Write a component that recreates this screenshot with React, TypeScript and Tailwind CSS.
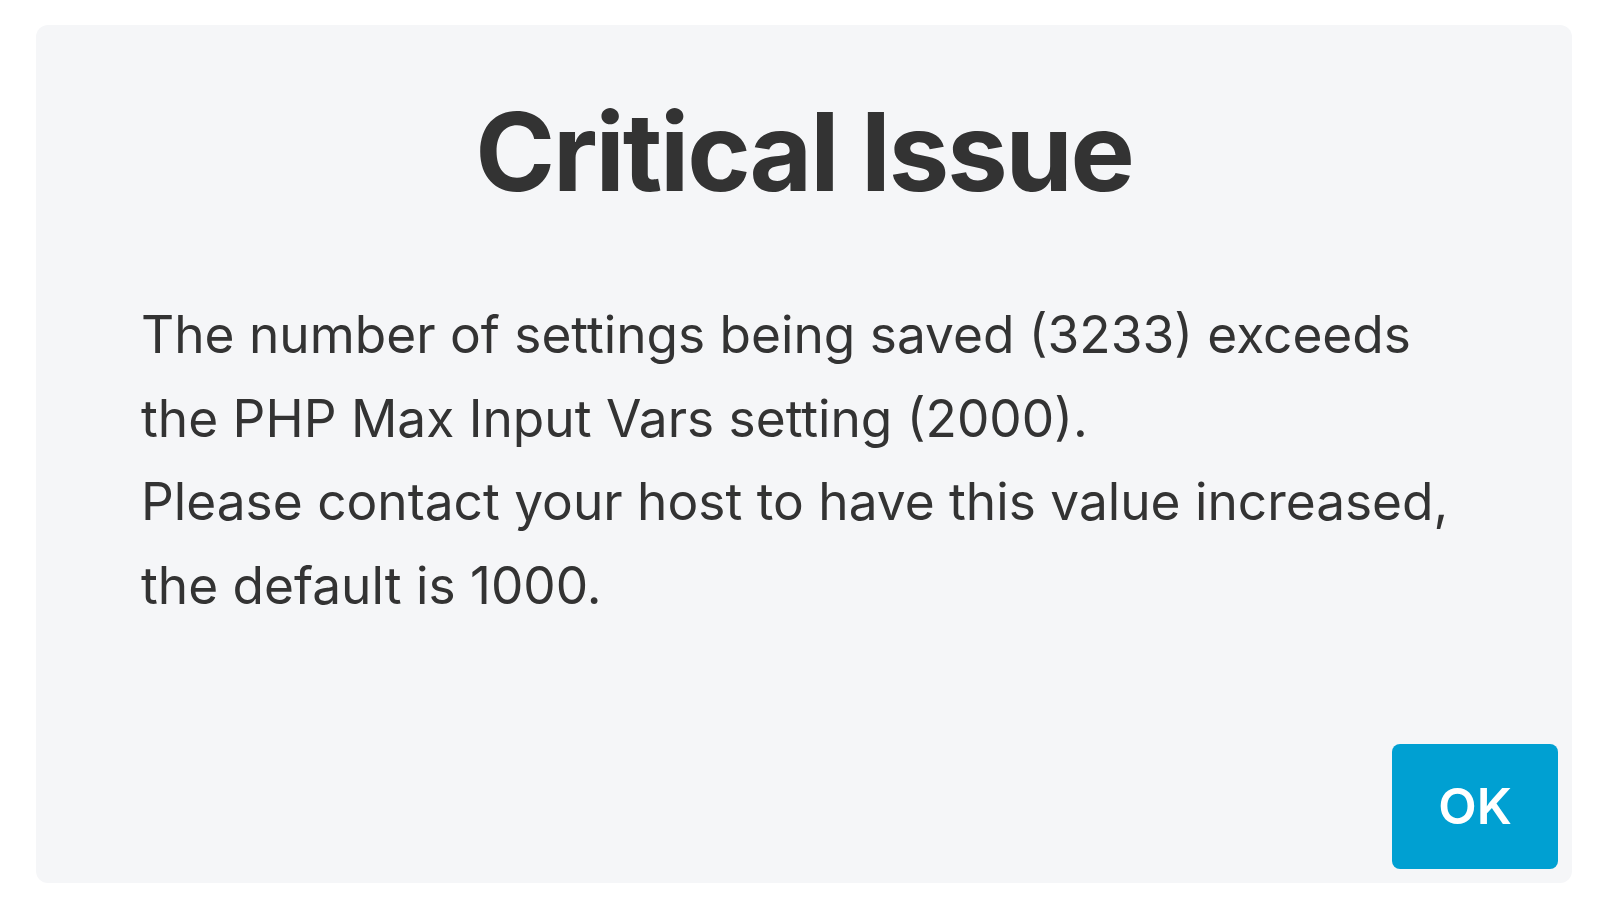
export default function App() {
  return (
    <div className="w-[1600px] h-[903px] bg-white pt-[25px] pl-[36px] pr-[28px] pb-[20px] font-['Inter',sans-serif]">
      <div className="h-full w-full rounded-xl bg-[#f5f6f8] flex flex-col">
        <h1 className="mt-[73px] text-center text-[108px] leading-none font-bold text-[#333333] tracking-[-0.02em]">
          Critical Issue
        </h1>
        <p className="mt-[87px] ml-[105px] w-[1360px] text-[51.4px] leading-[83.7px] text-[#333333]">
          The number of settings being saved (3233) exceeds the PHP Max Input Vars setting (2000).
          <br />
          Please contact your host to have this value increased, the default is 1000.
        </p>
        <div className="mt-auto flex justify-end p-[14px]">
          <button className="w-[166px] h-[125px] rounded-lg bg-[#00a0d2] text-white text-[50px] font-semibold">
            OK
          </button>
        </div>
      </div>
    </div>
  );
}
